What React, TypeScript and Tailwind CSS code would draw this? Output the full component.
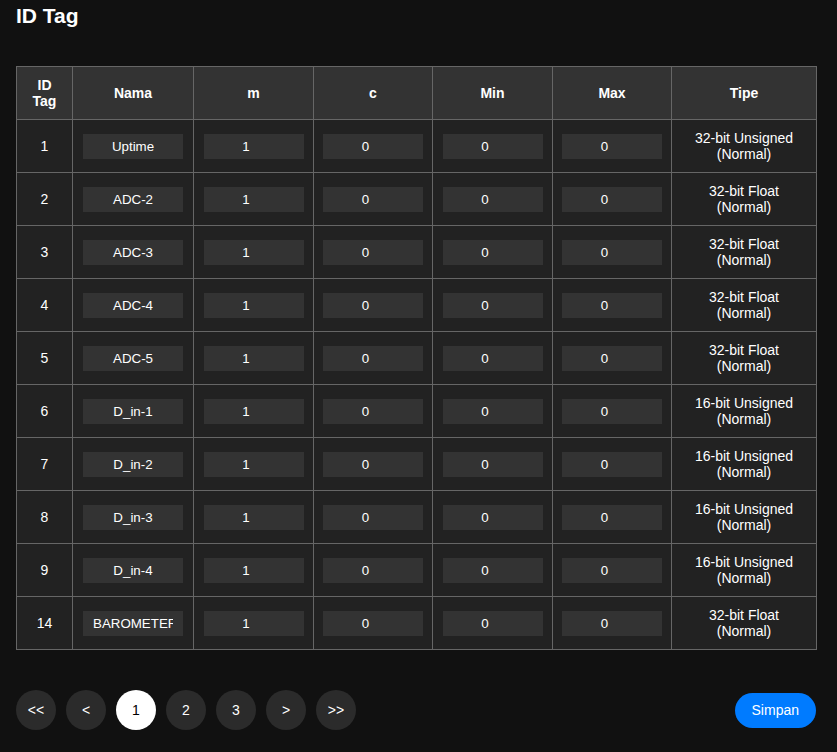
import React, { useState } from 'react';

interface TagRow {
    id: number;
    nama: string;
    tipe: string;
}

const ROWS: TagRow[] = [
    { id: 1, nama: 'Uptime', tipe: '32-bit Unsigned (Normal)' },
    { id: 2, nama: 'ADC-2', tipe: '32-bit Float (Normal)' },
    { id: 3, nama: 'ADC-3', tipe: '32-bit Float (Normal)' },
    { id: 4, nama: 'ADC-4', tipe: '32-bit Float (Normal)' },
    { id: 5, nama: 'ADC-5', tipe: '32-bit Float (Normal)' },
    { id: 6, nama: 'D_in-1', tipe: '16-bit Unsigned (Normal)' },
    { id: 7, nama: 'D_in-2', tipe: '16-bit Unsigned (Normal)' },
    { id: 8, nama: 'D_in-3', tipe: '16-bit Unsigned (Normal)' },
    { id: 9, nama: 'D_in-4', tipe: '16-bit Unsigned (Normal)' },
    { id: 14, nama: 'BAROMETER', tipe: '32-bit Float (Normal)' },
];

const Field: React.FC<{ value: string; type?: string }> = ({ value, type = 'text' }) => (
    <input
        type={type}
        defaultValue={value}
        className="w-[100px] h-[25px] bg-[#333333] text-white text-[13.333px] text-center px-[10px] outline-none border-0"
    />
);

const App: React.FC = () => {
    const [page, setPage] = useState(1);
    const pager = ['<<', '<', '1', '2', '3', '>', '>>'];

    return (
        <div className="min-h-[752px] bg-[#111111] text-white px-4 pt-[3px] pb-6 font-['Liberation_Sans',Arial,sans-serif]">
            <h2 className="text-[21px] leading-[25px] font-bold">ID Tag</h2>

            <table className="mt-[38px] w-[800px] border-collapse table-fixed text-[14px]">
                <colgroup>
                    <col className="w-[56px]" />
                    <col className="w-[121px]" />
                    <col className="w-[120px]" />
                    <col className="w-[119px]" />
                    <col className="w-[120px]" />
                    <col className="w-[119px]" />
                    <col className="w-[145px]" />
                </colgroup>
                <thead>
                    <tr className="bg-[#333333] h-[53px]">
                        {['ID Tag', 'Nama', 'm', 'c', 'Min', 'Max', 'Tipe'].map((h) => (
                            <th key={h} className="border border-[#666666] px-3 font-bold leading-[16px] text-center">
                                {h}
                            </th>
                        ))}
                    </tr>
                </thead>
                <tbody>
                    {ROWS.map((r) => (
                        <tr key={r.id} className="bg-[#222222] h-[53px]">
                            <td className="border border-[#666666] text-center">{r.id}</td>
                            <td className="border border-[#666666] text-center">
                                <Field value={r.nama} />
                            </td>
                            <td className="border border-[#666666] text-center">
                                <Field type="number" value="1" />
                            </td>
                            <td className="border border-[#666666] text-center">
                                <Field type="number" value="0" />
                            </td>
                            <td className="border border-[#666666] text-center">
                                <Field type="number" value="0" />
                            </td>
                            <td className="border border-[#666666] text-center">
                                <Field type="number" value="0" />
                            </td>
                            <td className="border border-[#666666] text-center leading-[16px] px-4">{r.tipe}</td>
                        </tr>
                    ))}
                </tbody>
            </table>

            <div className="mt-[40px] w-[800px] flex items-center justify-between">
                <div className="flex gap-[10px]">
                    {pager.map((p) => {
                        const active = p === String(page);
                        return (
                            <button
                                key={p}
                                onClick={() => /^\d$/.test(p) && setPage(Number(p))}
                                className={
                                    active
                                        ? 'w-10 h-10 rounded-full bg-white text-black text-[14px]'
                                        : 'w-10 h-10 rounded-full bg-[#2b2b2b] text-white text-[14px]'
                                }
                            >
                                {p}
                            </button>
                        );
                    })}
                </div>
                <button className="h-[35px] px-[17px] rounded-full bg-[#007bff] text-white text-[14px]">
                    Simpan
                </button>
            </div>
        </div>
    );
};

export default App;
